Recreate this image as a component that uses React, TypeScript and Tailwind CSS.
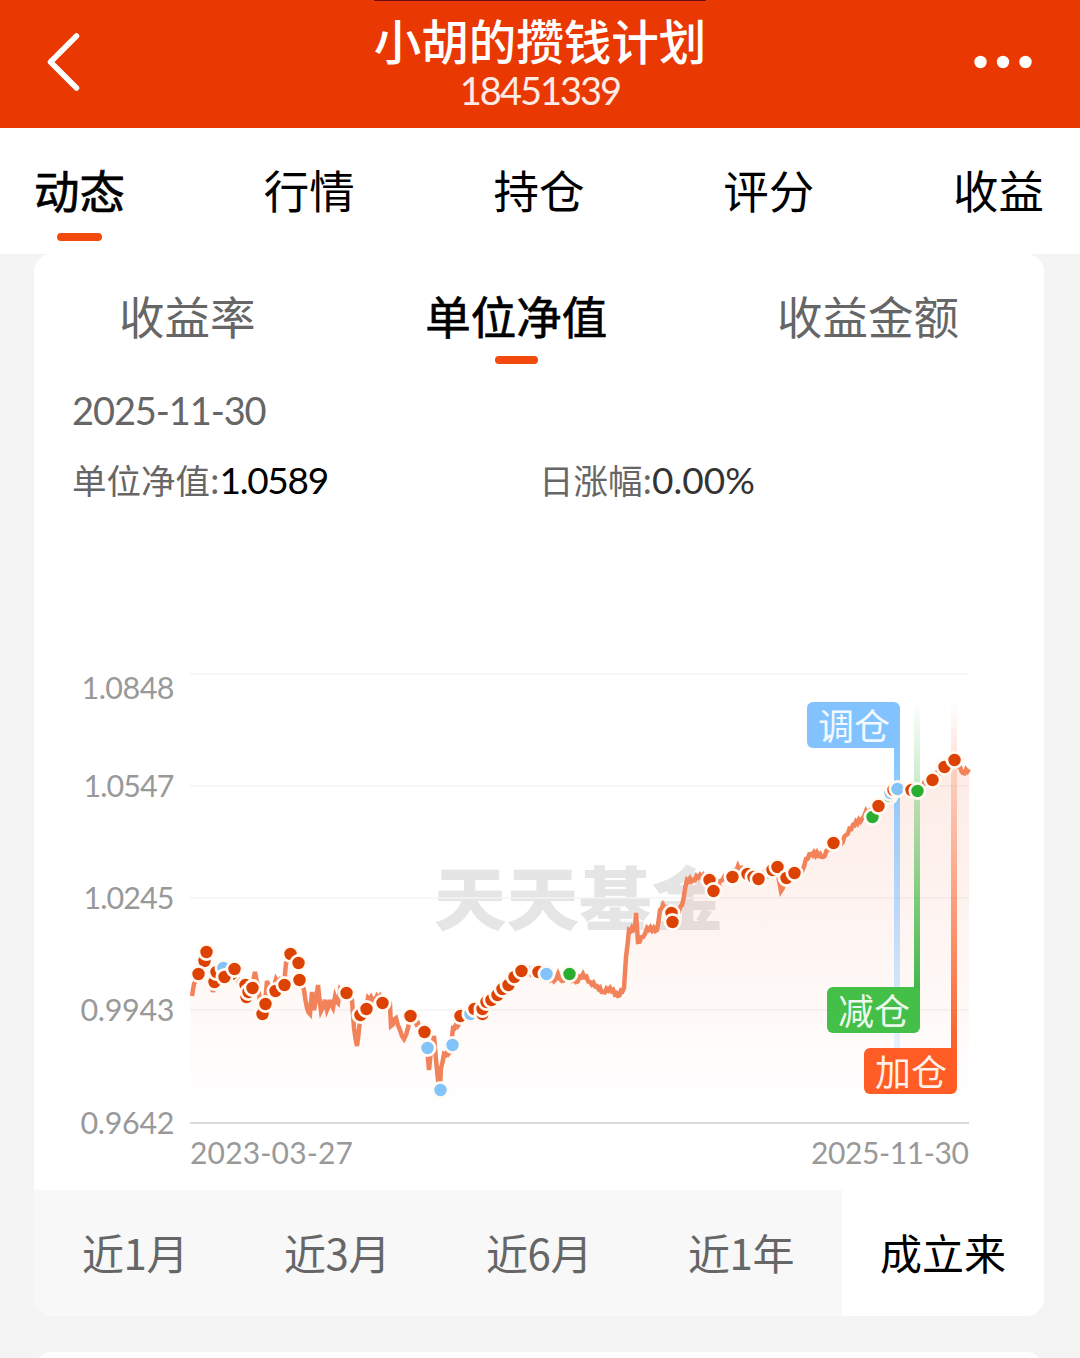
import { clsx } from "clsx";

type Point = [number, number];
type MarkerKind = "add" | "cut" | "adjust";
type Marker = [number, number, MarkerKind];

const mainTabs = ["动态", "行情", "持仓", "评分", "收益"];
const valueTabs = ["收益率", "单位净值", "收益金额"];
const ranges = ["近1月", "近3月", "近6月", "近1年", "成立来"];

const yAxis = [
  { label: "1.0848", textY: 699, lineY: 674, width: 93 },
  { label: "1.0547", textY: 797, lineY: 786, width: 91 },
  { label: "1.0245", textY: 909, lineY: 898, width: 91 },
  { label: "0.9943", textY: 1021, lineY: 1010, width: 94 },
  { label: "0.9642", textY: 1134, lineY: 1123, width: 94 },
];

const netValue: Point[] = [
  [192, 996], [194, 984], [198, 973], [203, 961], [206, 952], [210, 966], [213, 992], [216, 974],
  [223, 968], [230, 978], [234, 970], [243, 989], [248, 997], [252, 984], [255, 972], [258, 985],
  [262, 1013], [265, 1003], [267, 981], [272, 991], [276, 979], [284, 985], [286, 963], [290, 954],
  [298, 964], [299, 980], [304, 990], [307, 1008], [310, 1014], [312, 992], [314, 1010], [318, 985],
  [321, 1011], [325, 1000], [327, 1010], [330, 1000], [333, 1008], [335, 997], [338, 1003], [340, 990],
  [346, 993], [352, 1000], [354, 1028], [357, 1046], [360, 1020], [366, 1009], [368, 998], [374, 999],
  [380, 996], [386, 1004], [390, 1005], [391, 1026], [396, 1018], [400, 1030], [404, 1039], [408, 1028],
  [410, 1017], [415, 1021], [424, 1032], [427, 1048], [429, 1070], [431, 1050], [434, 1036], [436, 1060],
  [438, 1080], [440, 1088], [441, 1068], [444, 1054], [450, 1052], [453, 1028], [459, 1024], [460, 1016],
  [470, 1013], [481, 1011], [487, 1002], [496, 997], [504, 988], [511, 980], [520, 971], [538, 972],
  [546, 974], [554, 981], [558, 974], [562, 981], [568, 974], [576, 982], [583, 974], [590, 982],
  [597, 986], [603, 992], [610, 988], [618, 996], [624, 988], [626, 957], [629, 930], [635, 928],
  [636, 913], [638, 942], [643, 937], [647, 928], [657, 930], [660, 910], [663, 905], [670, 913],
  [677, 914], [682, 905], [687, 880], [693, 880], [700, 875], [709, 880], [713, 890], [720, 881],
  [724, 877], [732, 877], [738, 866], [746, 875], [757, 879], [772, 871], [777, 867], [781, 891],
  [786, 879], [793, 873], [802, 871], [806, 859], [811, 854], [820, 854], [823, 857], [828, 850],
  [833, 843], [841, 844], [846, 835], [853, 825], [862, 819], [866, 811], [872, 815], [878, 806],
  [888, 795], [897, 789], [908, 790], [917, 791], [924, 783], [931, 779], [944, 767], [954, 760],
  [960, 767], [963, 773], [969, 769],
];

const markers: Marker[] = [
  [204, 961, "add"], [206, 952, "add"], [198, 974, "add"], [214, 982, "add"], [216, 972, "add"],
  [223, 968, "adjust"], [231, 974, "add"], [224, 977, "add"], [234, 969, "add"], [245, 985, "add"],
  [246, 997, "add"], [248, 992, "add"], [252, 988, "add"], [262, 1014, "add"], [265, 1004, "add"],
  [275, 991, "add"], [284, 985, "add"], [290, 954, "add"], [298, 963, "add"], [299, 980, "add"],
  [346, 993, "add"], [360, 1015, "add"], [366, 1009, "add"], [382, 1003, "add"], [410, 1016, "add"],
  [424, 1032, "add"], [427, 1048, "adjust"], [440, 1090, "adjust"], [452, 1045, "adjust"],
  [460, 1016, "add"], [470, 1014, "adjust"], [474, 1009, "add"], [482, 1014, "add"], [482, 1009, "add"],
  [486, 1002, "add"], [491, 1000, "add"], [497, 995, "add"], [502, 989, "add"], [508, 985, "add"],
  [514, 977, "add"], [521, 971, "add"], [538, 972, "add"], [546, 974, "adjust"], [569, 974, "cut"],
  [671, 913, "add"], [672, 922, "add"], [709, 880, "add"], [713, 891, "add"], [732, 877, "add"],
  [747, 874, "add"], [753, 877, "add"], [758, 879, "add"], [772, 870, "add"], [777, 867, "add"],
  [786, 878, "add"], [794, 873, "add"], [833, 843, "add"], [872, 817, "cut"], [878, 806, "add"],
  [889, 796, "cut"], [890, 793, "adjust"], [893, 790, "add"], [897, 789, "adjust"],
  [911, 790, "add"], [917, 791, "cut"], [932, 780, "add"], [944, 767, "add"], [954, 760, "add"],
];

const markerColor: Record<MarkerKind, string> = {
  add: "#dd4205",
  cut: "#2aae32",
  adjust: "#82c3fa",
};

// Splits each segment into short pieces with a small daily wobble.
function withNoise(points: Point[]): Point[] {
  const out: Point[] = [];
  points.forEach(([x, y], i) => {
    const next = points[i + 1];
    out.push([x, y]);
    if (!next) return;
    const steps = Math.floor((next[0] - x) / 1.5);
    for (let s = 1; s < steps; s++) {
      const t = s / steps;
      out.push([x + (next[0] - x) * t, y + (next[1] - y) * t + (s % 2 ? 1.4 : -1.4)]);
    }
  });
  return out;
}

const linePath = "M" + withNoise(netValue).map((p) => p.join(" ")).join("L");
const areaPath = `${linePath}V1123H190V996Z`;

interface FlagProps {
  x: number;
  y: number;
  fill: string;
  text: string;
}

function Flag({ x, y, fill, text }: FlagProps) {
  return (
    <g>
      <rect x={x} y={y} width="93" height="46" rx="6" fill={fill} />
      <text
        x={x + 47}
        y={y + 37.5}
        textAnchor="middle"
        fill="#fff"
        fillOpacity="0.92"
        className="font-['Noto_Sans_CJK_SC',sans-serif] text-[36px]"
      >
        {text}
      </text>
    </g>
  );
}

function NetValueChart() {
  return (
    <svg viewBox="34 540 1010 650" className="block h-[650px] w-full">
      <defs>
        <linearGradient id="area" x1="0" y1="760" x2="0" y2="1110" gradientUnits="userSpaceOnUse">
          <stop offset="0" stopColor="#f05a28" stopOpacity="0.12" />
          <stop offset="1" stopColor="#f05a28" stopOpacity="0" />
        </linearGradient>
        <linearGradient id="adjust" x1="0" y1="740" x2="0" y2="1060" gradientUnits="userSpaceOnUse">
          <stop offset="0" stopColor="#82c3ff" />
          <stop offset="1" stopColor="#82c3ff" stopOpacity="0.15" />
        </linearGradient>
        <linearGradient id="cut" x1="0" y1="700" x2="0" y2="990" gradientUnits="userSpaceOnUse">
          <stop offset="0" stopColor="#44bf48" stopOpacity="0" />
          <stop offset="1" stopColor="#44b548" />
        </linearGradient>
        <linearGradient id="add" x1="0" y1="700" x2="0" y2="1050" gradientUnits="userSpaceOnUse">
          <stop offset="0" stopColor="#f8602a" stopOpacity="0" />
          <stop offset="1" stopColor="#f8602a" />
        </linearGradient>
      </defs>

      <text
        x="434"
        y="925"
        textLength="290"
        lengthAdjust="spacingAndGlyphs"
        fill="#e5e5e5"
        className="font-['Noto_Sans_CJK_SC',sans-serif] text-[69px] font-black"
      >
        天天基金
      </text>

      {yAxis.map((tick, i) => (
        <g key={tick.label}>
          <line
            x1="190"
            x2="969"
            y1={tick.lineY}
            y2={tick.lineY}
            stroke={i === yAxis.length - 1 ? "#dadada" : "#f3f3f3"}
            strokeWidth={i === yAxis.length - 1 ? 2 : 1.5}
          />
          <text
            x={174.5 - tick.width}
            y={tick.textY}
            textLength={tick.width}
            fill="#999"
            className="font-[Lato,sans-serif] text-[30.5px]"
          >
            {tick.label}
          </text>
        </g>
      ))}

      <path d={areaPath} fill="url(#area)" />
      <path d={linePath} fill="none" stroke="#f2825a" strokeWidth="4.5" />

      <rect x="894" y="740" width="6" height="320" fill="url(#adjust)" />
      <rect x="914" y="700" width="6" height="295" fill="url(#cut)" />
      <rect x="951" y="700" width="6" height="355" fill="url(#add)" />

      {markers.map(([x, y, kind], i) => (
        <circle key={i} cx={x + 0.5} cy={y} r="7.6" fill={markerColor[kind]} stroke="#fffaf3" strokeWidth="2.8" />
      ))}

      <Flag x={807} y={702} fill="#82c3ff" text="调仓" />
      <Flag x={827} y={987} fill="#44bf48" text="减仓" />
      <Flag x={864} y={1048} fill="#ff5c26" text="加仓" />

      <text x="190" y="1164" textLength="163" fill="#999" className="font-[Lato,sans-serif] text-[30px]">
        2023-03-27
      </text>
      <text x="811" y="1164" textLength="158" fill="#999" className="font-[Lato,sans-serif] text-[30px]">
        2025-11-30
      </text>
    </svg>
  );
}

function Header() {
  return (
    <header className="relative grid h-32 shrink-0 grid-cols-[1fr_auto_1fr] items-center bg-[#e93802] pr-12 pl-[46px] text-white">
      <div className="absolute top-0 left-[374px] h-px w-[332px] rounded-b-full bg-[#6b0a10]" />
      <svg width="34" height="60" viewBox="0 0 34 60" fill="none" className="-mt-1">
        <path d="M30.500 4L4.500 30L30.500 56" stroke="currentColor" strokeWidth="5.500" strokeLinecap="round" strokeLinejoin="round" />
      </svg>
      <div className="flex flex-col items-center">
        <h1 className="mt-[-10px] ml-0.5 text-[47.5px] leading-[62px] font-medium">小胡的攒钱计划</h1>
        <p className="ml-0.5 font-[Lato,sans-serif] text-[38px] leading-[38px] tracking-[-2px] text-white/90">18451339</p>
      </div>
      <svg width="58" height="14" viewBox="0 0 58 14" fill="currentColor" className="-mt-1 justify-self-end">
        <circle cx="6.500" cy="7" r="6.200" />
        <circle cx="29" cy="7" r="6.200" />
        <circle cx="51.500" cy="7" r="6.200" />
      </svg>
    </header>
  );
}

export default function App() {
  return (
    <div className="flex h-[1358px] w-[1080px] flex-col overflow-hidden bg-[#f4f4f4] font-['Noto_Sans_CJK_SC',sans-serif] text-black">
      <Header />

      <nav className="flex h-[126px] shrink-0 justify-between bg-white pt-7 pr-9 pl-[34px]">
        {mainTabs.map((tab, i) => (
          <div key={tab} className="flex flex-col items-center">
            <span className={clsx("text-[45.5px] leading-[66px]", i === 0 && "[-webkit-text-stroke:0.7px_black]")}>
              {tab}
            </span>
            {i === 0 && <span className="mt-[11px] h-2 w-[45px] rounded-full bg-[#f2490c]" />}
          </div>
        ))}
      </nav>

      <main className="mr-9 ml-[34px] shrink-0 overflow-hidden rounded-[18px] bg-white">
        <div className="flex h-[118px] justify-around pt-[28px]">
          {valueTabs.map((tab, i) => (
            <div key={tab} className="flex flex-col items-center">
              <span
                className={clsx(
                  "text-[45.5px] leading-[66px]",
                  i === 1 ? "[-webkit-text-stroke:0.7px_black]" : "text-[#666]",
                )}
              >
                {tab}
              </span>
              {i === 1 && <span className="mt-2 h-2 w-[43px] rounded-full bg-[#f2490c]" />}
            </div>
          ))}
        </div>

        <div className="h-[168px] px-[38px] pt-[14px]">
          <p className="font-[Lato,sans-serif] text-[38px] leading-[48px] tracking-[-1.1px] text-[#666]">2025-11-30</p>
          <div className="mt-[20px] flex text-[34.5px] leading-[50px] text-[#666]">
            <p className="w-[467px]">
              单位净值:
              <span className="font-[Lato,sans-serif] text-[37px] tracking-[-1.300px] text-black">1.0589</span>
            </p>
            <p>
              日涨幅:
              <span className="font-[Lato,sans-serif] text-[37px] text-[#333]">0.00%</span>
            </p>
          </div>
        </div>

        <NetValueChart />

        <div className="grid h-[126px] grid-cols-5 bg-[#f8f8f8]">
          {ranges.map((range, i) => (
            <div
              key={range}
              className={clsx(
                "flex items-center justify-center pb-0.5 text-[42px] leading-none",
                i === 4 ? "bg-white" : "tracking-[-0.5px] text-[#666]",
              )}
            >
              {range}
            </div>
          ))}
        </div>
      </main>

      <div className="mt-9 mr-9 ml-[34px] h-20 shrink-0 rounded-[18px] bg-white" />
    </div>
  );
}
